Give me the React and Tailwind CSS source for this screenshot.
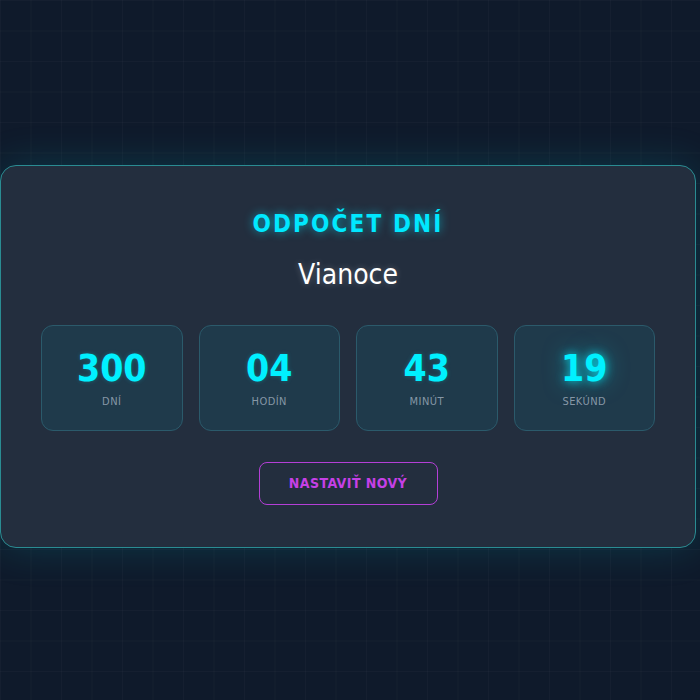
import React from 'react';

const font = { fontFamily: '"DejaVu Sans Condensed", "DejaVu Sans", sans-serif' };

function TimeBox({ value, label, glow }) {
  return (
    <div className="flex h-[106px] flex-1 flex-col items-center justify-center rounded-xl border border-[#2b5a6b] bg-[#1f3a4b]">
      <span
        className={`text-[37px] font-bold leading-none text-[#00f0ff] ${glow ? '[text-shadow:0_0_10px_rgba(0,240,255,0.8),0_0_22px_rgba(0,240,255,0.5)]' : '[text-shadow:0_0_4px_rgba(0,240,255,0.25)]'}`}
      >
        {value}
      </span>
      <span className="mt-[9px] text-[11px] uppercase leading-none tracking-[0.04em] text-[#8697a6]">{label}</span>
    </div>
  );
}

export default function App() {
  const units = [
    { value: '300', label: 'Dní' },
    { value: '04', label: 'Hodín' },
    { value: '43', label: 'Minút' },
    { value: '19', label: 'Sekúnd', glow: true },
  ];

  return (
    <div
      className="min-h-[700px] bg-[#0f1a2b] bg-[linear-gradient(rgba(255,255,255,0.025)_1px,transparent_1px),linear-gradient(90deg,rgba(255,255,255,0.025)_1px,transparent_1px)] bg-[size:30.5px_30.5px] pt-[165px]"
      style={font}
    >
      <div className="w-[696px] rounded-2xl border border-[#2a8c92] bg-[#232e3e] px-[40px] pb-[42px] pt-[42px] shadow-[0_0_40px_rgba(0,200,210,0.18)]">
        <h1 className="text-center text-[24px] font-bold leading-[32px] tracking-[0.09em] text-[#00e8ff] [text-shadow:0_0_10px_rgba(0,230,255,0.6)]">
          ODPOČET DNÍ
        </h1>
        <h2 className="mt-[17px] text-center text-[28px] leading-[36px] text-white [text-shadow:0_0_6px_rgba(255,255,255,0.25)]">
          Vianoce
        </h2>
        <div className="mt-[32px] flex gap-4">
          {units.map((u) => (
            <TimeBox key={u.label} {...u} />
          ))}
        </div>
        <div className="mt-[31px] flex justify-center">
          <button className="h-[43px] w-[179px] rounded-lg border border-[#b43fd6] text-[14px] font-bold tracking-[0.03em] text-[#c640e6]">
            NASTAVIŤ NOVÝ
          </button>
        </div>
      </div>
    </div>
  );
}
